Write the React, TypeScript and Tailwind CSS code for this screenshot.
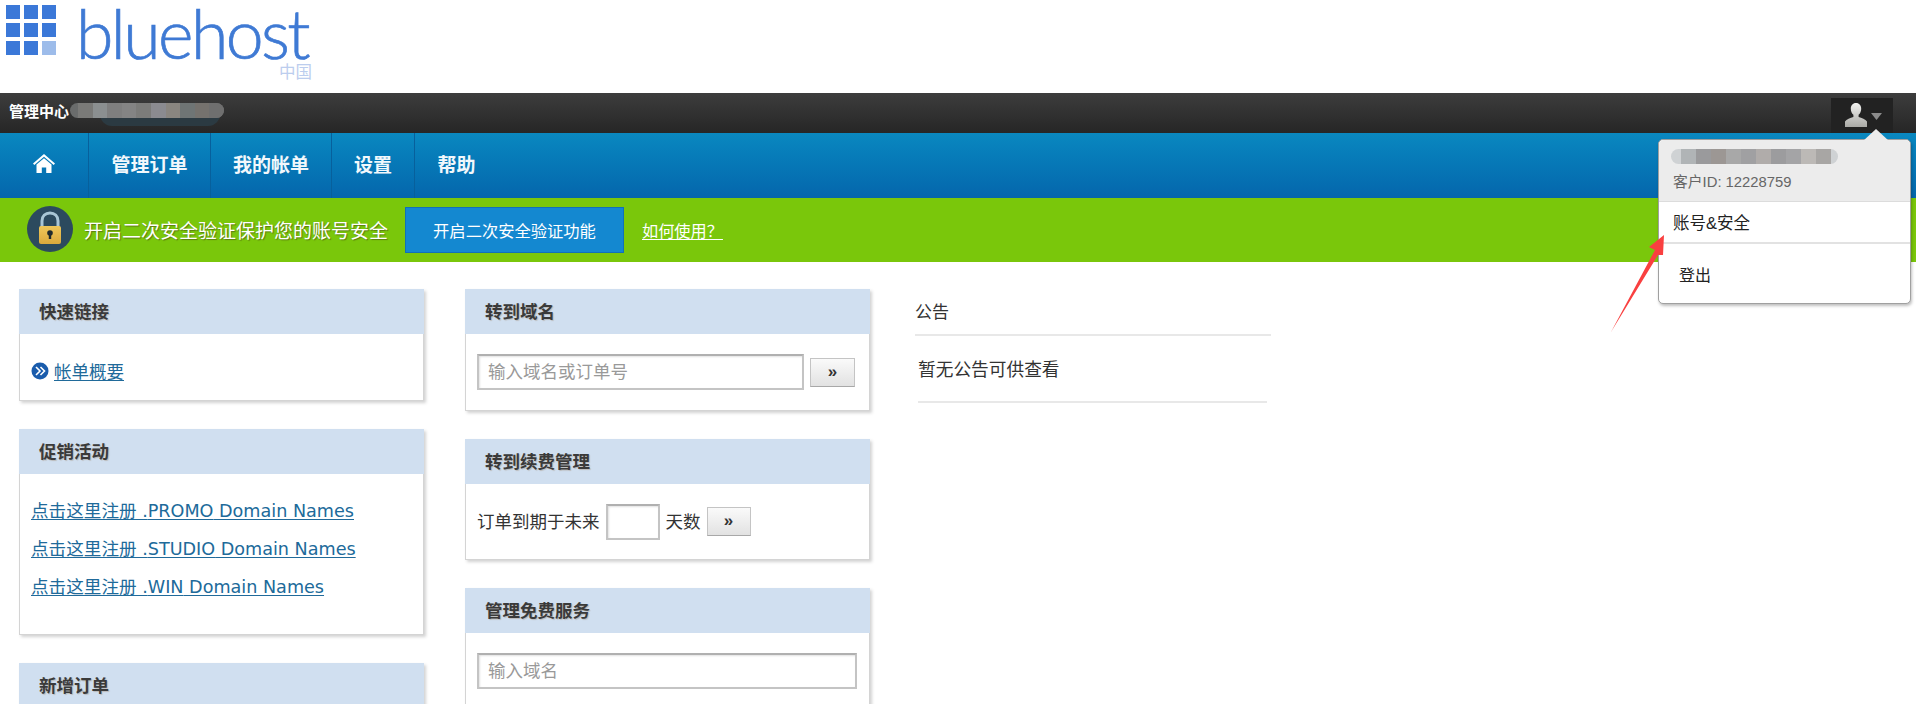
const cjk = "font-['Noto_Sans_CJK_SC',sans-serif]";
const mosaicTop = ["#7a7a78", "#8b8f90", "#7f7f7f", "#848484", "#7c7c7a", "#8b8b90", "#8a8680", "#6f7575", "#75726e", "#6f6f6f"];
const mosaicMenu = ["#b0b4b6", "#9a9a9c", "#9c9794", "#a8a8a8", "#a0a0a2", "#b0acaa", "#9c9c9e", "#a4a4a6", "#bcb9b6", "#a8a6a4"];

function Logo() {
  const cells = [0, 1, 2, 3, 4, 5, 6, 7, 8];
  return (
    <div className="h-[93px] bg-white flex items-start pl-[6px] pt-[5px]">
      <div className="grid grid-cols-3 gap-[4px] w-[50px]">
        {cells.map((c) => (
          <div key={c} className={c === 8 ? "h-[14px] bg-[#9dbcea]" : "h-[14px] bg-[#3b78d8]"} />
        ))}
      </div>
      <div className="ml-[20px] w-[236px] -mt-[2px]">
        <div className="font-['Lato',sans-serif] font-light text-[68px] leading-[60px] tracking-[-2.6px] whitespace-nowrap text-[#3f7ad4] [-webkit-text-stroke:0.7px_#3f7ad4]">bluehost</div>
        <div className={`${cjk} text-right text-[16.500px] leading-[16px] text-[#bccdee]`}>中国</div>
      </div>
    </div>
  );
}

function TopBar() {
  return (
    <div className="h-[40px] bg-gradient-to-b from-[#3d3d3d] to-[#262626] flex items-center">
      <span className={`${cjk} ml-[9px] -mt-[3px] font-bold text-[15px] text-white`}>管理中心</span>
      <div className="relative ml-[1px] h-[24px] w-[154px]">
        <div className="absolute left-[30px] top-[13px] h-[12px] w-[120px] rounded-b-full bg-[#2b3a42]" />
        <div className="absolute left-0 top-[2px] h-[15px] w-[154px] rounded-full overflow-hidden flex bg-[#6a6c6c] pl-[8px]">
          {mosaicTop.map((c, i) => (
            <div key={i} className="w-[15px] h-full" style={{ backgroundColor: c }} />
          ))}
        </div>
      </div>
      <div className="ml-auto mr-[23px] mt-[4px] w-[62px] h-[35px] bg-[#222222] flex items-center pl-[14px] gap-[4px]">
        <svg width="22" height="24" viewBox="0 0 22 24">
          <defs>
            <linearGradient id="person" x1="0" y1="0" x2="0" y2="1">
              <stop offset="0" stopColor="#f2f2f0" />
              <stop offset="1" stopColor="#a9a9a5" />
            </linearGradient>
          </defs>
          <path d="M11 0c3.300 0 5.200 2.500 5.200 5.800 0 2.600-1 4.800-2.600 6v2.200c3 1 7 2.300 8.400 4.600V24H0v-5.400c1.400-2.300 5.400-3.600 8.400-4.600v-2.200c-1.600-1.200-2.600-3.400-2.600-6C5.800 2.500 7.700 0 11 0z" fill="url(#person)" />
        </svg>
        <svg width="11" height="7" viewBox="0 0 11 7" className="mt-[3px]">
          <path d="M0 0h11L5.500 7z" fill="#8c8c8c" />
        </svg>
      </div>
    </div>
  );
}

function NavBar() {
  const items = [
    { label: "管理订单", w: "w-[122px]" },
    { label: "我的帐单", w: "w-[121px]" },
    { label: "设置", w: "w-[83px]" },
    { label: "帮助", w: "w-[83px]" },
  ];
  return (
    <div className="h-[65px] bg-gradient-to-b from-[#0a88c0] to-[#0566ac] flex">
      <div className="w-[89px] border-r border-[#07609c] flex items-center justify-center pb-[5px] pr-[1px]">
        <svg width="22" height="19" viewBox="0 0 22 19">
          <path d="M11 0l11 9.500-1.300 1.500L11 2.700 1.300 11 0 9.500z" fill="#ffffff" />
          <path d="M11 4.200l7.500 6.400V19h-5.300v-5.500H8.800V19H3.500v-8.400z" fill="#ffffff" />
        </svg>
      </div>
      {items.map((it) => (
        <div
          key={it.label}
          className={`${it.w} ${cjk} ${it.label === "帮助" ? "" : "border-r border-[#07609c]"} flex items-center justify-center font-bold text-[19px] text-[#f2f8fc] pb-[2px]`}
        >
          {it.label}
        </div>
      ))}
    </div>
  );
}

function Lock() {
  return (
    <svg width="46" height="46" viewBox="0 0 46 46" className="mb-[2px]">
      <defs>
        <linearGradient id="lockBody" x1="0" y1="0" x2="0" y2="1">
          <stop offset="0" stopColor="#f0c75a" />
          <stop offset="1" stopColor="#dba93c" />
        </linearGradient>
      </defs>
      <circle cx="23" cy="23" r="23" fill="#2c4a5e" />
      <path d="M15 22v-7c0-5 3.500-8 8-8s8 3 8 8v7" fill="none" stroke="#a9c6d6" strokeWidth="3" />
      <rect x="12" y="20" width="22" height="18" rx="2" fill="url(#lockBody)" />
      <circle cx="23" cy="27" r="2.800" fill="#1f2a2e" />
      <rect x="21.800" y="28" width="2.400" height="5" fill="#1f2a2e" />
    </svg>
  );
}

function SecurityBar() {
  return (
    <div className={`${cjk} h-[64px] bg-[#7ac70b] flex items-center pl-[27px]`}>
      <Lock />
      <span className="ml-[11px] w-[321px] whitespace-nowrap text-[19px] text-white [text-shadow:1px_1px_1px_#5c7a10]">开启二次安全验证保护您的账号安全</span>
      <button className="w-[219px] h-[46px] bg-[#1488d0] border border-[#1270b8] text-white text-[16.300px]">开启二次安全验证功能</button>
      <a className="ml-[18px] text-white text-[16.200px] underline underline-offset-2">如何使用？</a>
    </div>
  );
}

function Panel({ title, bodyClass, children }: { title: string; bodyClass: string; children?: React.ReactNode }) {
  return (
    <div className="border-x border-b border-[#d4d4d4] bg-white shadow-[2px_2px_3px_rgba(0,0,0,0.18)]">
      <div className={`${cjk} -mx-px h-[45px] bg-[#d0dff0] flex items-center pl-[20px] font-bold text-[17.500px] text-[#3a3a3a] [text-shadow:1px_1px_1px_#bbbbbb]`}>
        {title}
      </div>
      <div className={bodyClass}>{children}</div>
    </div>
  );
}

function GoButton({ w }: { w: string }) {
  return (
    <button className={`${w} h-[29px] bg-gradient-to-b from-[#fafafa] to-[#e2e2e2] border border-[#c4c4c4] border-b-[#a8a8a8] font-['Liberation_Sans',sans-serif] font-bold text-[17px] leading-none text-[#333333] pb-[3px]`}>
      »
    </button>
  );
}

function Field({ w, placeholder }: { w: string; placeholder?: string }) {
  return (
    <div className={`${w} ${cjk} h-[36px] border-2 border-[#c4c4c4] border-t-[#b0b0b0] bg-white flex items-center pl-[9px] pb-[1px] text-[17.500px] text-[#999999] shadow-[inset_1px_1px_2px_rgba(0,0,0,0.12)]`}>
      {placeholder}
    </div>
  );
}

function PromoLink({ zone }: { zone: string }) {
  return (
    <a className="font-['DejaVu_Sans','Noto_Sans_CJK_SC',sans-serif] text-[17.600px] leading-[24px] whitespace-nowrap text-[#206a9a] underline underline-offset-2 w-fit">
      点击这里注册 .{zone} Domain Names
    </a>
  );
}

function Dropdown() {
  return (
    <div className="absolute left-[1658px] top-[139px] w-[253px] h-[165px] rounded-[5px] border border-[#a0a0a0] bg-white shadow-[1px_2px_3px_rgba(0,0,0,0.25)]">
      <svg width="26" height="12" viewBox="0 0 26 12" className="absolute left-[204px] top-[-11px]">
        <path d="M0 12L13 0l13 12z" fill="#ececec" />
      </svg>
      <div className="h-[62px] rounded-t-[5px] bg-[#ececec] border-b border-[#dcdcdc] pl-[12px] pt-[9px]">
        <div className="h-[15px] w-[167px] rounded-full overflow-hidden flex bg-[#cfd2d4] pl-[10px]">
          {mosaicMenu.map((c, i) => (
            <div key={i} className="w-[15px] h-full" style={{ backgroundColor: c }} />
          ))}
        </div>
        <div className="font-['Liberation_Sans','Noto_Sans_CJK_SC',sans-serif] pl-[2px] mt-[8px] text-[14.800px] leading-[20px] text-[#666666]">客户ID: 12228759</div>
      </div>
      <div className="h-[42px] border-b-2 border-[#e2e2e2] flex items-center pl-[14px] pt-[3px] font-['Liberation_Sans','Noto_Sans_CJK_SC',sans-serif] text-[16.500px] text-[#222222]">账号&amp;安全</div>
      <div className={`${cjk} h-[58px] flex items-center pl-[20px] pt-[2px] text-[16px] text-[#222222]`}>登出</div>
    </div>
  );
}

function RedArrow() {
  return (
    <svg width="70" height="110" viewBox="0 0 70 110" className="absolute left-[1605px] top-[228px]">
      <path d="M59 7L44 19l6 3L6 104l47-77h5z" fill="#f94040" />
    </svg>
  );
}

export default function App() {
  return (
    <div className="relative h-[704px] overflow-hidden bg-white">
      <Logo />
      <TopBar />
      <NavBar />
      <SecurityBar />

      <div className="flex pl-[19px] pt-[27px]">
        <div className="w-[405px] flex flex-col gap-[28px]">
          <Panel title="快速链接" bodyClass="h-[66px] flex items-center pl-[11px] pt-[8px]">
            <svg width="18" height="18" viewBox="0 0 18 18">
              <circle cx="9" cy="9" r="8.500" fill="#1a5cac" />
              <path d="M5 5l4 4-4 4M9.500 5l4 4-4 4" fill="none" stroke="#ffffff" strokeWidth="1.600" />
            </svg>
            <a className={`${cjk} ml-[5px] text-[17.500px] text-[#206a9a] underline underline-offset-2`}>帐单概要</a>
          </Panel>
          <Panel title="促销活动" bodyClass="h-[160px] flex flex-col gap-[14px] pl-[11px] pt-[25px]">
            <PromoLink zone="PROMO" />
            <PromoLink zone="STUDIO" />
            <PromoLink zone="WIN" />
          </Panel>
          <Panel title="新增订单" bodyClass="h-[40px]" />
        </div>

        <div className="ml-[41px] w-[405px] flex flex-col gap-[28px]">
          <Panel title="转到域名" bodyClass="h-[76px] flex items-start pl-[11px] pt-[20px] gap-[6px]">
            <Field w="w-[327px]" placeholder="输入域名或订单号" />
            <div className="pt-[4px]"><GoButton w="w-[45px]" /></div>
          </Panel>
          <Panel title="转到续费管理" bodyClass={`${cjk} h-[75px] flex items-center pl-[11px] gap-[6px] text-[17.500px] text-[#333333]`}>
            <span>订单到期于未来</span>
            <Field w="w-[54px]" />
            <span>天数</span>
            <GoButton w="w-[44px]" />
          </Panel>
          <Panel title="管理免费服务" bodyClass="h-[80px] pl-[11px] pt-[20px]">
            <Field w="w-[380px]" placeholder="输入域名" />
          </Panel>
        </div>

        <div className={`${cjk} ml-[45px] w-[356px]`}>
          <div className="h-[47px] pb-[2px] border-b-2 border-[#e8e8e8] flex items-center text-[17px] text-[#333333]">公告</div>
          <div className="ml-[3px] mr-[4px] h-[67px] border-b-2 border-[#e8e8e8] flex items-center text-[17.700px] text-[#333333]">暂无公告可供查看</div>
        </div>
      </div>

      <Dropdown />
      <RedArrow />
    </div>
  );
}
